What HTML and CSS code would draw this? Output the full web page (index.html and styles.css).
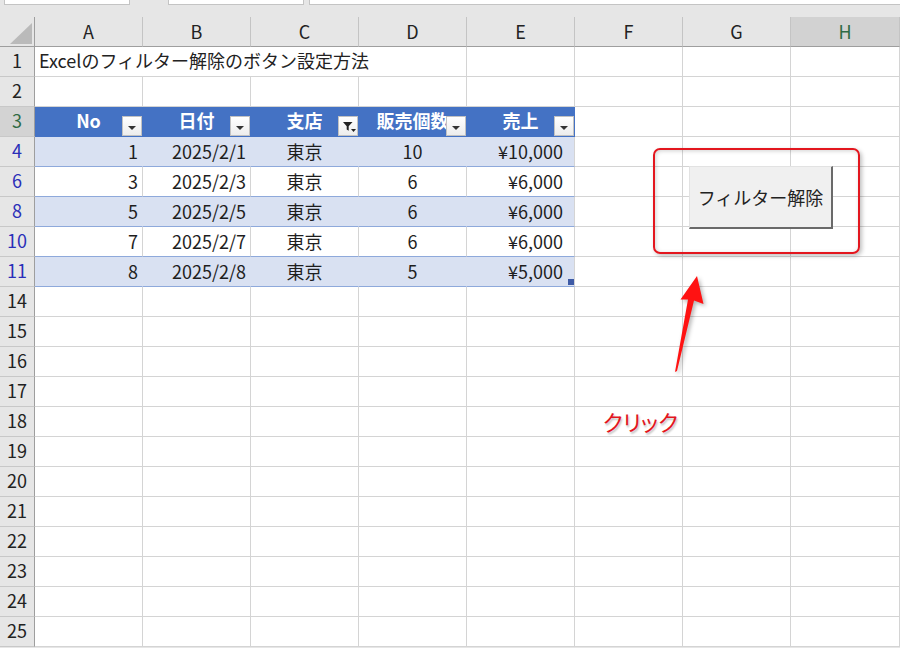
FILE: index.html
```html
<!DOCTYPE html>
<html lang="ja">
<head>
    <meta charset="UTF-8">
    <meta name="viewport" content="width=device-width, initial-scale=1.0">
    <title>Excelのフィルター解除のボタン設定方法</title>
    <link rel="stylesheet" href="styles.css">
</head>
<body>
    <!-- bottom edge of the name box / formula bar -->
    <div class="top-edge">
        <div class="name-box"></div>
        <div class="fx-buttons"></div>
        <div class="fx-input"></div>
    </div>

    <div class="sheet">
        <!-- column headers -->
        <div class="corner"><span class="corner-tri"></span></div>
        <div class="col-head">A</div>
        <div class="col-head">B</div>
        <div class="col-head">C</div>
        <div class="col-head">D</div>
        <div class="col-head">E</div>
        <div class="col-head">F</div>
        <div class="col-head">G</div>
        <div class="col-head selected">H</div>

        <!-- row 1 -->
        <div class="row-head">1</div>
        <div class="cell title">Excelのフィルター解除のボタン設定方法</div>
        <div class="cell"></div><div class="cell"></div><div class="cell"></div><div class="cell"></div>

        <!-- row 2 -->
        <div class="row-head">2</div>
        <div class="cell"></div><div class="cell"></div><div class="cell"></div><div class="cell"></div>
        <div class="cell"></div><div class="cell"></div><div class="cell"></div><div class="cell"></div>

        <!-- row 3: table header -->
        <div class="row-head selected">3</div>
        <div class="cell th">No<span class="filter-btn"></span></div>
        <div class="cell th">日付<span class="filter-btn"></span></div>
        <div class="cell th">支店<span class="filter-btn active">
            <svg width="18" height="18" viewBox="0 0 18 18">
                <path d="M4 5h9.5l-3.8 4.2v4.6l-2-1.2v-3.4z" fill="#222"/>
                <path d="M12 12h5l-2.5 3z" fill="#222"/>
            </svg>
        </span></div>
        <div class="cell th">販売個数<span class="filter-btn"></span></div>
        <div class="cell th">売上<span class="filter-btn"></span></div>
        <div class="cell"></div><div class="cell"></div><div class="cell"></div>

        <!-- row 4 -->
        <div class="row-head filtered">4</div>
        <div class="cell band num">1</div>
        <div class="cell band num">2025/2/1</div>
        <div class="cell band mid">東京</div>
        <div class="cell band mid">10</div>
        <div class="cell band money edge">¥10,000</div>
        <div class="cell"></div><div class="cell"></div><div class="cell"></div>

        <!-- row 6 -->
        <div class="row-head filtered">6</div>
        <div class="cell plain num">3</div>
        <div class="cell plain num">2025/2/3</div>
        <div class="cell plain mid">東京</div>
        <div class="cell plain mid">6</div>
        <div class="cell plain money">¥6,000</div>
        <div class="cell"></div><div class="cell"></div><div class="cell"></div>

        <!-- row 8 -->
        <div class="row-head filtered">8</div>
        <div class="cell band num">5</div>
        <div class="cell band num">2025/2/5</div>
        <div class="cell band mid">東京</div>
        <div class="cell band mid">6</div>
        <div class="cell band money edge">¥6,000</div>
        <div class="cell"></div><div class="cell"></div><div class="cell"></div>

        <!-- row 10 -->
        <div class="row-head filtered">10</div>
        <div class="cell plain num">7</div>
        <div class="cell plain num">2025/2/7</div>
        <div class="cell plain mid">東京</div>
        <div class="cell plain mid">6</div>
        <div class="cell plain money">¥6,000</div>
        <div class="cell"></div><div class="cell"></div><div class="cell"></div>

        <!-- row 11 -->
        <div class="row-head filtered">11</div>
        <div class="cell band num">8</div>
        <div class="cell band num">2025/2/8</div>
        <div class="cell band mid">東京</div>
        <div class="cell band mid">5</div>
        <div class="cell band money edge">¥5,000<span class="resize-handle"></span></div>
        <div class="cell"></div><div class="cell"></div><div class="cell"></div>

        <!-- empty rows -->
        <div class="row-head">14</div>
        <div class="cell"></div><div class="cell"></div><div class="cell"></div><div class="cell"></div><div class="cell"></div><div class="cell"></div><div class="cell"></div><div class="cell"></div>
        <div class="row-head">15</div>
        <div class="cell"></div><div class="cell"></div><div class="cell"></div><div class="cell"></div><div class="cell"></div><div class="cell"></div><div class="cell"></div><div class="cell"></div>
        <div class="row-head">16</div>
        <div class="cell"></div><div class="cell"></div><div class="cell"></div><div class="cell"></div><div class="cell"></div><div class="cell"></div><div class="cell"></div><div class="cell"></div>
        <div class="row-head">17</div>
        <div class="cell"></div><div class="cell"></div><div class="cell"></div><div class="cell"></div><div class="cell"></div><div class="cell"></div><div class="cell"></div><div class="cell"></div>
        <div class="row-head">18</div>
        <div class="cell"></div><div class="cell"></div><div class="cell"></div><div class="cell"></div><div class="cell"></div><div class="cell"></div><div class="cell"></div><div class="cell"></div>
        <div class="row-head">19</div>
        <div class="cell"></div><div class="cell"></div><div class="cell"></div><div class="cell"></div><div class="cell"></div><div class="cell"></div><div class="cell"></div><div class="cell"></div>
        <div class="row-head">20</div>
        <div class="cell"></div><div class="cell"></div><div class="cell"></div><div class="cell"></div><div class="cell"></div><div class="cell"></div><div class="cell"></div><div class="cell"></div>
        <div class="row-head">21</div>
        <div class="cell"></div><div class="cell"></div><div class="cell"></div><div class="cell"></div><div class="cell"></div><div class="cell"></div><div class="cell"></div><div class="cell"></div>
        <div class="row-head">22</div>
        <div class="cell"></div><div class="cell"></div><div class="cell"></div><div class="cell"></div><div class="cell"></div><div class="cell"></div><div class="cell"></div><div class="cell"></div>
        <div class="row-head">23</div>
        <div class="cell"></div><div class="cell"></div><div class="cell"></div><div class="cell"></div><div class="cell"></div><div class="cell"></div><div class="cell"></div><div class="cell"></div>
        <div class="row-head">24</div>
        <div class="cell"></div><div class="cell"></div><div class="cell"></div><div class="cell"></div><div class="cell"></div><div class="cell"></div><div class="cell"></div><div class="cell"></div>
        <div class="row-head">25</div>
        <div class="cell"></div><div class="cell"></div><div class="cell"></div><div class="cell"></div><div class="cell"></div><div class="cell"></div><div class="cell"></div><div class="cell"></div>
    </div>

    <!-- annotations drawn over the sheet -->
    <div class="click-frame"></div>
    <button class="macro-btn">フィルター解除</button>
    <svg class="pointer-arrow" width="50" height="120" viewBox="660 266 50 120">
        <polygon points="697,276 703.5,304 694,300.5 677,371 675,372 688,299.5 680.5,299.5" fill="#ff1212"/>
    </svg>
    <div class="click-label">クリック</div>
</body>
</html>
```

FILE: styles.css
```css
* {
    margin: 0;
    padding: 0;
    box-sizing: border-box;
}

body {
    position: relative;
    width: 900px;
    height: 648px;
    overflow: hidden;
    background-color: #e6e6e6;
    font-family: "Noto Sans CJK JP", "Noto Sans", sans-serif;
    font-size: 18px;
    color: #1e1e1e;
}

/* name box and formula bar, only their lower edge is visible */
.top-edge {
    display: flex;
    height: 17px;
    padding-left: 4px;
}

.top-edge div {
    height: 5px;
    background-color: #fff;
    border: 1px solid #c4c4c4;
    border-top: none;
}

.name-box {
    width: 126px;
    margin-right: 38px;
}

.fx-buttons {
    width: 136px;
    margin-right: 5px;
}

.fx-input {
    flex: 1;
    border-right: none !important;
}

/* worksheet grid */
.sheet {
    display: grid;
    grid-template-columns: 35px repeat(7, 108px) 1fr;
    grid-auto-rows: 30px;
    background-color: #fff;
}

.corner {
    display: flex;
    align-items: flex-end;
    justify-content: flex-end;
    padding: 0 2px 2px 0;
    background-color: #e6e6e6;
    border-right: 1px solid #9e9e9e;
    border-bottom: 1px solid #9e9e9e;
}

.corner-tri {
    width: 0;
    height: 0;
    border-left: 22px solid transparent;
    border-bottom: 21px solid #bababa;
}

.col-head {
    display: flex;
    align-items: center;
    justify-content: center;
    padding-bottom: 2px;
    background-color: #e6e6e6;
    border-right: 1px solid #c4c4c4;
    border-bottom: 1px solid #9e9e9e;
    color: #222;
    line-height: 1;
}

.col-head.selected {
    background-color: #d2d2d2;
    color: #2f6b45;
}

.row-head {
    display: flex;
    align-items: center;
    justify-content: center;
    padding-bottom: 3px;
    background-color: #e6e6e6;
    border-right: 1px solid #9e9e9e;
    border-bottom: 1px solid #c8c8c8;
    color: #222;
    line-height: 1;
}

.row-head.selected {
    background-color: #d3d3d3;
    color: #2f6b45;
}

.row-head.filtered {
    color: #2b2fb8;
}

.cell {
    position: relative;
    display: flex;
    align-items: center;
    padding: 0 4px 2px;
    border-right: 1px solid #d4d4d4;
    border-bottom: 1px solid #d4d4d4;
    line-height: 1;
    white-space: nowrap;
}

.title {
    grid-column: span 4;
    padding-bottom: 4px;
    color: #222;
}

/* excel table */
.th {
    justify-content: center;
    padding-bottom: 4px;
    background-color: #4472c4;
    border-right-color: #4472c4;
    border-bottom-color: #4472c4;
    color: #fff;
    font-weight: bold;
}

.band {
    background-color: #d9e1f2;
    border-right-color: #d9e1f2;
    border-bottom-color: #8ea9db;
}

.plain {
    border-bottom-color: #8ea9db;
}

.band.edge {
    border-right-color: #d4d4d4;
}

.num {
    justify-content: flex-end;
}

.mid {
    justify-content: center;
}

.money {
    justify-content: flex-end;
    padding-right: 11px;
}

.filter-btn {
    position: absolute;
    right: 0;
    bottom: 0;
    width: 20px;
    height: 20px;
    display: flex;
    align-items: center;
    justify-content: center;
    background: linear-gradient(#ffffff, #ededed);
    border: 1px solid #c2c2c2;
}

.filter-btn::after {
    content: "";
    margin-top: 3px;
    border-left: 4px solid transparent;
    border-right: 4px solid transparent;
    border-top: 4px solid #333;
}

.filter-btn.active::after {
    display: none;
}

.resize-handle {
    position: absolute;
    right: 0;
    bottom: 1px;
    width: 6px;
    height: 6px;
    background-color: #3d5aa6;
}

/* annotations */
.click-frame {
    position: absolute;
    left: 653px;
    top: 148px;
    width: 207px;
    height: 106px;
    border: 2px solid #e3161e;
    border-radius: 7px;
    box-shadow: 2px 2px 4px rgba(0, 0, 0, 0.25), inset 1px 1px 4px rgba(0, 0, 0, 0.18);
}

.macro-btn {
    position: absolute;
    left: 689px;
    top: 166px;
    width: 144px;
    height: 63px;
    background-color: #f0f0f0;
    border: 1px solid #e2e2e2;
    border-right: 2px solid #6a6a6a;
    border-bottom: 2px solid #6a6a6a;
    font-family: "Noto Sans CJK JP", "Noto Sans", sans-serif;
    font-size: 18px;
    color: #222;
    line-height: 1;
}

.pointer-arrow {
    position: absolute;
    left: 660px;
    top: 266px;
    filter: drop-shadow(2px 2px 2px rgba(0, 0, 0, 0.3));
}

.click-label {
    position: absolute;
    left: 603px;
    top: 408px;
    font-size: 22px;
    line-height: 1.2;
    font-feature-settings: "palt";
    color: #e3161e;
    text-shadow: 1px 2px 2px rgba(0, 0, 0, 0.25);
}
```
